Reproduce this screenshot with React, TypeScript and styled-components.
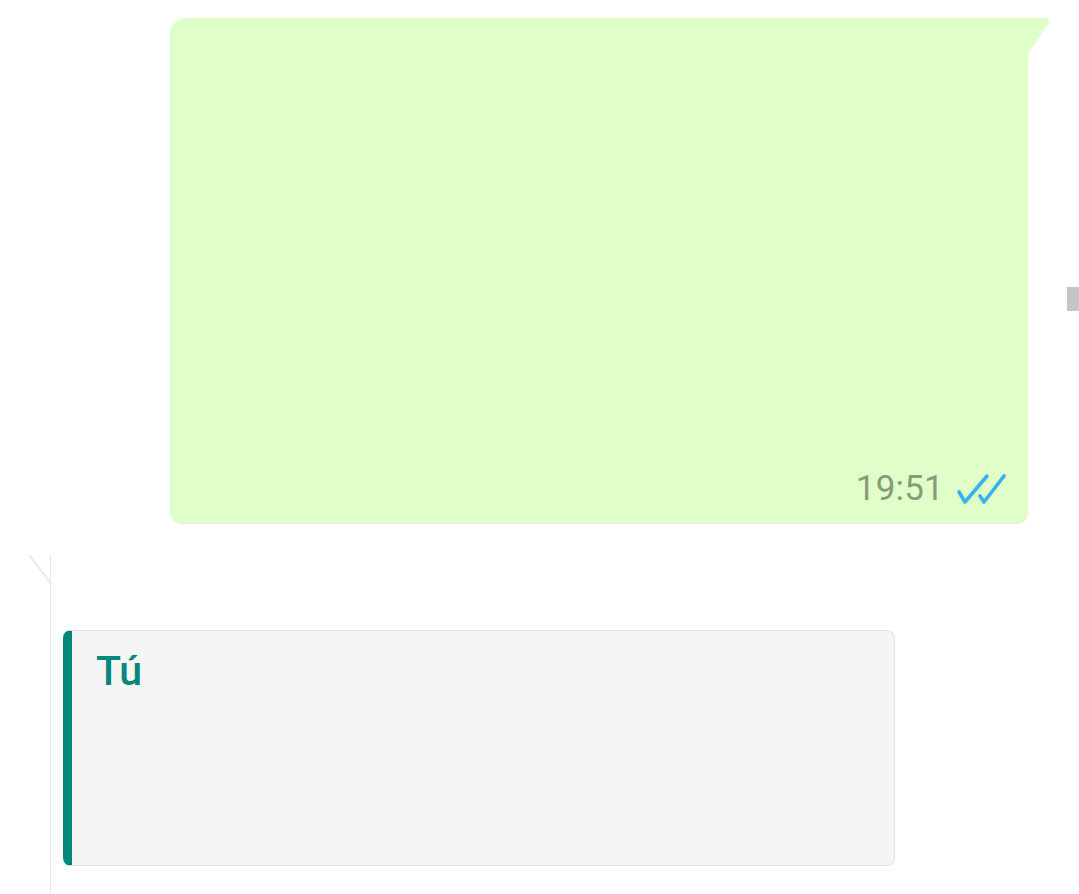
import React from "react";
import styled, { createGlobalStyle } from "styled-components";

const Global = createGlobalStyle`
  html, body { margin: 0; padding: 0; background: #ffffff; overflow: hidden; }
  body { font-family: Roboto, "Noto Sans", "Liberation Sans", sans-serif; }
`;

const Page = styled.div`
  position: relative;
  width: 1079px;
  height: 894px;
  display: flex;
  flex-direction: column;
  padding-top: 18px;
  box-sizing: border-box;
`;

const OutRow = styled.div`
  display: flex;
  padding-left: 170px;
`;

const OutBubble = styled.div`
  position: relative;
  width: 858px;
  height: 505px;
  background: #e0fec7;
  border-radius: 16px 0 12px 12px;
  box-shadow: 0 1px 1px rgba(0, 0, 0, 0.1);
  display: flex;
  align-items: flex-end;
  justify-content: flex-end;
  padding: 0 22px 14px 0;
  box-sizing: border-box;
  &::after {
    content: "";
    position: absolute;
    top: 0;
    right: -22px;
    width: 23px;
    height: 38px;
    background: #e0fec7;
    clip-path: polygon(0 0, 19px 0, 21px 1px, 22px 3px, 22px 5px, 0 38px);
  }
`;

const Meta = styled.div`
  display: flex;
  align-items: center;
  gap: 12px;
`;

const Time = styled.span`
  font-size: 35px;
  color: #8a9a79;
  letter-spacing: 0.2px;
`;

const InRow = styled.div`
  display: flex;
  padding-left: 50px;
  margin-top: 32px;
`;

const InBubble = styled.div`
  position: relative;
  width: 880px;
  height: 340px;
  background: #ffffff;
  border-left: 1.5px solid #e4e4e4;
  padding: 75px 0 0 12px;
  box-sizing: border-box;
`;

const Tail = styled.svg`
  position: absolute;
  left: -22px;
  top: 0;
`;

const Quote = styled.div`
  width: 832px;
  height: 236px;
  background: #f5f5f5;
  border: 1px solid #e1e1e1;
  border-left: 9px solid #00897b;
  border-radius: 8px;
  box-sizing: border-box;
  padding: 16px 0 0 24px;
`;

const Author = styled.div`
  font-size: 41px;
  font-weight: 500;
  color: #05877a;
  line-height: 48px;
`;

const ScrollThumb = styled.div`
  position: absolute;
  right: 0;
  top: 287px;
  width: 12px;
  height: 24px;
  background: #c6c6c6;
`;

export default function App() {
  return (
    <>
      <Global />
      <Page>
        <OutRow>
          <OutBubble>
            <Meta>
              <Time>19:51</Time>
              <svg width="50" height="32" viewBox="0 0 50 32" fill="none">
                <path d="M3 19 L9 29 L31 3" stroke="#36b2ee" strokeWidth="3.6" strokeLinecap="round" strokeLinejoin="round" />
                <path d="M24 23 L28 29 L48 3" stroke="#36b2ee" strokeWidth="3.6" strokeLinecap="round" strokeLinejoin="round" />
              </svg>
            </Meta>
          </OutBubble>
        </OutRow>
        <InRow>
          <InBubble>
            <Tail width="23" height="30" viewBox="0 0 23 30">
              <path d="M0.5 0.5 L21.5 28 L21.5 30" stroke="#e6e6e6" strokeWidth="1.5" fill="none" />
            </Tail>
            <Quote>
              <Author>Tú</Author>
            </Quote>
          </InBubble>
        </InRow>
        <ScrollThumb />
      </Page>
    </>
  );
}
